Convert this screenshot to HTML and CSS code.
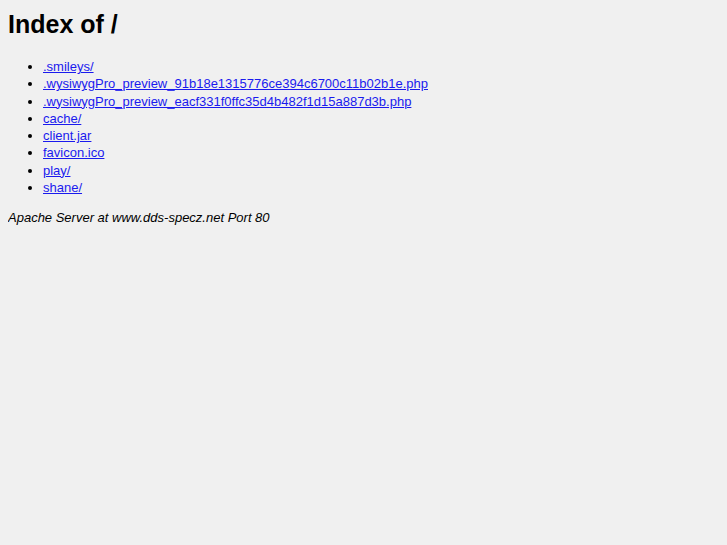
FILE: index.html
```html
<!DOCTYPE html>
<html>
<head>
<meta charset="utf-8">
<title>Index of /</title>
<link rel="stylesheet" href="styles.css">
</head>
<body>
<h1 class="title">Index of /</h1>
<ul class="listing">
<li><a href="#"> .smileys/</a></li>
<li><a href="#"> .wysiwygPro_preview_91b18e1315776ce394c6700c11b02b1e.php</a></li>
<li><a href="#"> .wysiwygPro_preview_eacf331f0ffc35d4b482f1d15a887d3b.php</a></li>
<li><a href="#"> cache/</a></li>
<li><a href="#"> client.jar</a></li>
<li><a href="#"> favicon.ico</a></li>
<li><a href="#"> play/</a></li>
<li><a href="#"> shane/</a></li>
</ul>
<address class="footer">Apache Server at www.dds-specz.net Port 80</address>
</body>
</html>
```
FILE: styles.css
```css
html { background: #f0f0f0; }
body {
  margin: 8px;
  font-family: "Liberation Sans", Arial, sans-serif;
  font-size: 13px;
  line-height: 17px;
  color: #000;
}
.title {
  font-size: 25px;
  line-height: 30px;
  font-weight: bold;
  margin: 0 0 19px 0;
  padding-top: 1px;
}
.listing {
  margin: 0 0 13px 0;
  padding-left: 35px;
  line-height: 17.3px;
}
.listing a { color: #1a1aee; }
.footer {
  font-style: italic;
  margin: 0;
}
```
